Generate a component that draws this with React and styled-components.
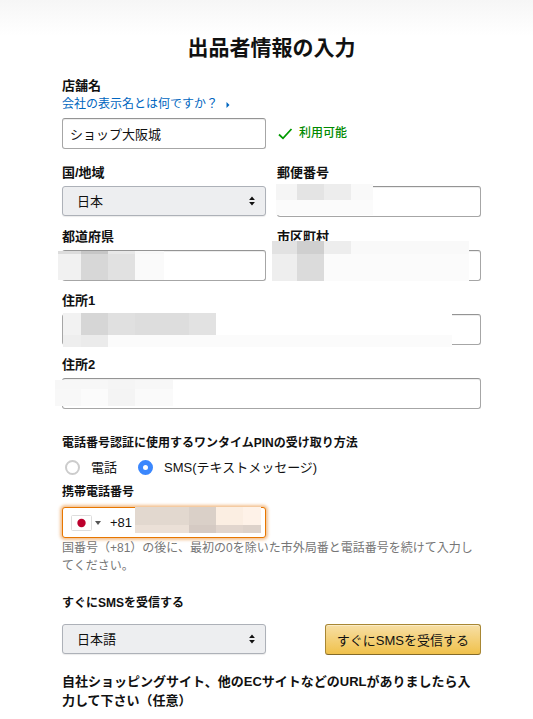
import React, { useState } from 'react';
import styled, { createGlobalStyle } from 'styled-components';

const GlobalStyle = createGlobalStyle`
  *, *::before, *::after {
    box-sizing: border-box;
  }

  body {
    margin: 0;
    background: #fff;
    color: #111;
    font-family: 'Liberation Sans', 'Noto Sans CJK JP', sans-serif;
    font-size: 13px;
    line-height: 19px;
    overflow-x: hidden;
    scrollbar-width: none;
  }

  button, input, select {
    font-family: inherit;
    font-size: 13px;
    color: inherit;
  }
`;

const Page = styled.main`
  padding: 34px 52px 24px 62px;
  background: linear-gradient(to bottom, #f6f6f6 0, #fff 36px) no-repeat;
`;

const Title = styled.h1`
  margin: 0 0 14px;
  font-size: 21px;
  line-height: 28px;
  font-weight: 700;
  text-align: center;
`;

const Columns = styled.div`
  display: grid;
  grid-template-columns: repeat(2, minmax(0, 1fr));
  column-gap: 11px;
`;

const Field = styled.div`
  margin-bottom: ${({ $gap }) => $gap || 10}px;
`;

const Label = styled.label`
  display: block;
  margin-bottom: ${({ $tight }) => ($tight ? 0 : 4)}px;
  font-size: ${({ $small }) => ($small ? 12 : 13)}px;
  font-weight: 700;
`;

const UrlHeading = styled.h2`
  margin: 0;
  font-size: 13px;
  font-weight: 700;
`;

const HelpLink = styled.a`
  display: flex;
  align-items: center;
  gap: 8px;
  margin-bottom: 4px;
  color: #0066c0;
  font-size: 12px;
  text-decoration: none;
`;

const ControlWrap = styled.div`
  position: relative;
`;

const TextInput = styled.input`
  display: block;
  width: 100%;
  height: 31px;
  padding: 0 7px;
  border: 1px solid #a6a6a6;
  border-top-color: #949494;
  border-radius: 3px;
  background: #fff;
  box-shadow: inset 0 1px 0 rgba(0, 0, 0, 0.07);
  outline: none;
`;

const Select = styled.select`
  appearance: none;
  display: block;
  width: 100%;
  height: 30px;
  padding: 0 14px;
  border: 1px solid #adb1b8;
  border-radius: 3px;
  background: #edeef0;
  box-shadow: 0 1px 1px rgba(0, 0, 0, 0.08);
`;

const SelectArrows = styled.svg`
  position: absolute;
  top: 10px;
  right: 11px;
  pointer-events: none;
`;

const MosaicSvg = styled.svg`
  position: absolute;
  left: ${({ $left }) => $left}px;
  top: ${({ $top }) => $top}px;
  pointer-events: none;
`;

const Available = styled.p`
  display: flex;
  align-items: center;
  align-self: end;
  gap: 5px;
  height: 31px;
  margin: 0 0 14px;
  color: #008a00;
  font-size: 12px;
  font-weight: 500;
`;

const Group = styled.fieldset`
  margin: 25px 0 6px;
  padding: 0;
  border: 0;
`;

const Legend = styled.legend`
  padding: 0;
  margin-bottom: 4px;
  font-size: 12px;
  font-weight: 700;
`;

const RadioRow = styled.div`
  display: flex;
  gap: 21px;
  height: 20px;
  padding-left: 3px;
`;

const RadioLabel = styled.label`
  display: flex;
  align-items: center;
  gap: 11px;
`;

const Radio = styled.input`
  appearance: none;
  flex: none;
  width: 15px;
  height: 15px;
  margin: 0;
  border: 2px solid #ccc;
  border-radius: 50%;
  background: #fff;

  &:checked {
    border: 5px solid #3b87fd;
  }
`;

const PhoneBox = styled.div`
  position: relative;
  display: flex;
  align-items: center;
  height: 31px;
  margin-top: 5px;
  padding-left: 8px;
  border: 1px solid #e77600;
  border-radius: 3px;
  background: #fff;
  box-shadow: 0 0 3px 2px rgba(228, 121, 17, 0.45);
`;

const CountryButton = styled.button`
  display: flex;
  align-items: center;
  gap: 3px;
  padding: 0;
  border: 0;
  background: none;
`;

const PhoneInput = styled.input`
  flex: 1;
  min-width: 0;
  height: 29px;
  padding: 0 0 0 9px;
  border: 0;
  background: transparent;
  outline: none;
`;

const Hint = styled.p`
  margin: 1px 0 19px;
  color: #767676;
  font-size: 12px;
  line-height: 18px;
`;

const SendRow = styled(Columns)`
  margin: 11px 0 17px;
`;

const SendButton = styled.button`
  justify-self: end;
  height: 31px;
  padding: 0 11px;
  border: 1px solid #a88734;
  border-bottom-color: #846a29;
  border-radius: 3px;
  background: linear-gradient(to bottom, #f7dfa5, #f0c14b);
  box-shadow: inset 0 1px 0 rgba(255, 255, 255, 0.4);
`;

// Each cell is [x, y, width, height, fill]
const MASKS = {
  postal: {
    left: -1, top: -2, width: 97, height: 31,
    cells: [
      [0, 0, 21, 16, '#f5f5f5'], [21, 0, 27, 16, '#e4e4e4'],
      [48, 0, 27, 16, '#ededed'], [75, 0, 22, 16, '#f9f9f9'],
      [0, 16, 97, 15, '#fbfbfb'],
    ],
  },
  prefecture: {
    left: -4, top: 1, width: 106, height: 29,
    cells: [
      [0, 0, 23, 3, '#dcdcdc'], [23, 0, 27, 3, '#c6c6c6'],
      [50, 0, 27, 3, '#e8e8e8'], [77, 0, 29, 3, '#f8f8f8'],
      [0, 3, 23, 26, '#f1f1f1'], [23, 3, 27, 26, '#d7d7d7'],
      [50, 3, 27, 26, '#e1e1e1'], [77, 3, 29, 26, '#fafafa'],
    ],
  },
  city: {
    left: -5, top: -9, width: 197, height: 40,
    cells: [
      [0, 0, 25, 13, '#e2e2e2'], [25, 0, 27, 13, '#cfcfcf'],
      [52, 0, 27, 13, '#ededed'], [79, 0, 118, 13, '#f9f9f9'],
      [0, 13, 25, 27, '#eeeeee'], [25, 13, 27, 27, '#dbdbdb'],
      [52, 13, 145, 27, '#fbfbfb'],
    ],
  },
  address1: {
    left: 1, top: -1, width: 389, height: 34,
    cells: [
      [0, 0, 18, 22, '#f2f2f2'], [18, 0, 27, 22, '#d6d6d6'],
      [45, 0, 27, 22, '#e0e0e0'], [72, 0, 54, 22, '#dddddd'],
      [126, 0, 27, 22, '#e2e2e2'], [153, 0, 236, 22, '#ffffff'],
      [0, 22, 18, 12, '#eeeeee'], [18, 22, 27, 12, '#ebebeb'],
      [45, 22, 344, 12, '#fbfbfb'],
    ],
  },
  address2: {
    left: -7, top: 2, width: 118, height: 26,
    cells: [
      [0, 0, 118, 9, '#f7f7f7'], [53, 0, 27, 9, '#f5f5f5'],
      [0, 9, 26, 17, '#f8f8f8'], [26, 9, 27, 17, '#fbfbfb'],
      [53, 9, 27, 17, '#f4f4f4'], [80, 9, 38, 17, '#fafafa'],
    ],
  },
  phone: {
    left: 72, top: -1, width: 126, height: 26,
    cells: [
      [0, 0, 54, 18, '#e2d8cf'], [54, 0, 27, 18, '#dad0c8'],
      [81, 0, 27, 18, '#fbeee2'], [108, 0, 18, 18, '#fef2e8'],
      [0, 18, 54, 8, '#ebe0d7'], [54, 18, 27, 8, '#d5cac3'],
      [81, 18, 27, 8, '#e1d5cd'], [108, 18, 18, 8, '#ddd2ca'],
    ],
  },
};

function Mosaic({ name }) {
  const { left, top, width, height, cells } = MASKS[name];
  return (
    <MosaicSvg $left={left} $top={top} width={width} height={height} shapeRendering="crispEdges" aria-hidden="true">
      {cells.map(([x, y, w, h, fill]) => (
        <rect key={`${x}-${y}`} x={x} y={y} width={w} height={h} fill={fill} />
      ))}
    </MosaicSvg>
  );
}

function Arrows() {
  return (
    <SelectArrows width="6" height="10" viewBox="0 0 6 10" aria-hidden="true">
      <path d="M3 0.5 L5.9 4 H0.1 Z M3 9.5 L5.9 6 H0.1 Z" fill="#111" />
    </SelectArrows>
  );
}

function MaskedField({ id, label }) {
  return (
    <Field>
      <Label htmlFor={id}>{label}</Label>
      <ControlWrap>
        <TextInput id={id} type="text" />
        <Mosaic name={id} />
      </ControlWrap>
    </Field>
  );
}

function App() {
  const [shopName, setShopName] = useState('ショップ大阪城');
  const [method, setMethod] = useState('sms');
  const [phone, setPhone] = useState('+81');

  return (
    <>
      <GlobalStyle />
      <Page lang="ja">
        <Title>出品者情報の入力</Title>

        <Columns>
          <Field $gap={14}>
            <Label htmlFor="shop" $tight>店舗名</Label>
            <HelpLink href="#shop-name">
              会社の表示名とは何ですか？
              <svg width="4" height="6" viewBox="0 0 4 6" aria-hidden="true">
                <path d="M0.5 0 L3.5 3 L0.5 6 Z" fill="#0066c0" />
              </svg>
            </HelpLink>
            <TextInput id="shop" value={shopName} onChange={(e) => setShopName(e.target.value)} />
          </Field>
          <Available>
            <svg width="17" height="14" viewBox="0 0 17 14" aria-hidden="true">
              <path d="M2 7.5 L6 11.3 L14.5 2" fill="none" stroke="#009a00" strokeWidth="1.8" />
            </svg>
            利用可能
          </Available>
        </Columns>

        <Columns>
          <Field>
            <Label htmlFor="country">国/地域</Label>
            <ControlWrap>
              <Select id="country" defaultValue="jp">
                <option value="jp">日本</option>
              </Select>
              <Arrows />
            </ControlWrap>
          </Field>
          <MaskedField id="postal" label="郵便番号" />
          <MaskedField id="prefecture" label="都道府県" />
          <MaskedField id="city" label="市区町村" />
        </Columns>

        <MaskedField id="address1" label="住所1" />
        <MaskedField id="address2" label="住所2" />

        <Group>
          <Legend>電話番号認証に使用するワンタイムPINの受け取り方法</Legend>
          <RadioRow>
            <RadioLabel>
              <Radio type="radio" name="method" checked={method === 'call'} onChange={() => setMethod('call')} />
              電話
            </RadioLabel>
            <RadioLabel>
              <Radio type="radio" name="method" checked={method === 'sms'} onChange={() => setMethod('sms')} />
              SMS(テキストメッセージ)
            </RadioLabel>
          </RadioRow>
        </Group>

        <Label htmlFor="phone" $small $tight>携帯電話番号</Label>
        <Columns>
          <PhoneBox>
            <CountryButton type="button" aria-label="日本 +81">
              <svg width="21" height="16" viewBox="0 0 21 16" aria-hidden="true">
                <rect x="0.5" y="0.5" width="20" height="15" rx="1" fill="#fff" stroke="#ddd" />
                <circle cx="10.5" cy="8" r="4.2" fill="#bc002d" />
              </svg>
              <svg width="6" height="4" viewBox="0 0 6 4" aria-hidden="true">
                <path d="M0 0 H6 L3 4 Z" fill="#555" />
              </svg>
            </CountryButton>
            <PhoneInput id="phone" type="tel" value={phone} onChange={(e) => setPhone(e.target.value)} />
            <Mosaic name="phone" />
          </PhoneBox>
        </Columns>
        <Hint>国番号（+81）の後に、最初の0を除いた市外局番と電話番号を続けて入力してください。</Hint>

        <Label htmlFor="language" $small>すぐにSMSを受信する</Label>
        <SendRow>
          <ControlWrap>
            <Select id="language" defaultValue="ja">
              <option value="ja">日本語</option>
            </Select>
            <Arrows />
          </ControlWrap>
          <SendButton type="button">すぐにSMSを受信する</SendButton>
        </SendRow>

        <UrlHeading>自社ショッピングサイト、他のECサイトなどのURLがありましたら入力して下さい（任意）</UrlHeading>
      </Page>
    </>
  );
}

export default App;
